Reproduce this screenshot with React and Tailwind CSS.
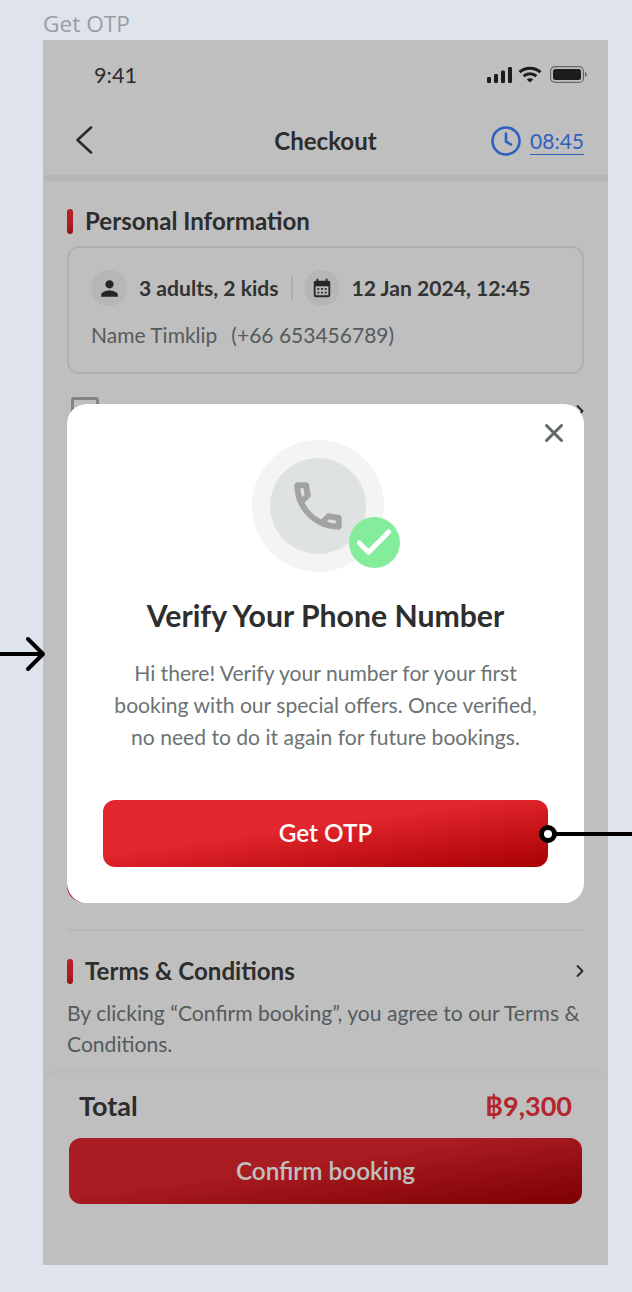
import React from 'react';
import { ChevronRight, X, Check } from 'lucide-react';
import { MdPerson, MdCalendarMonth } from 'react-icons/md';

function SectionTitle({ children }) {
  return (
    <div className="flex items-center gap-3">
      <span className="w-[6px] h-[25px] rounded-full bg-[linear-gradient(180deg,#ee2b33_60%,#c01a20_100%)]" />
      <h2 className="text-[24.1px] leading-7 font-bold text-[#3d3d3d]">{children}</h2>
    </div>
  );
}

function StatusIcons() {
  return (
    <div className="flex items-center gap-[5px]">
      <svg width="26" height="16" viewBox="0 0 26 16" fill="#262626">
        <rect x="0" y="10" width="4" height="6" rx="1.2" />
        <rect x="7" y="7" width="4" height="9" rx="1.2" />
        <rect x="14" y="3.5" width="4" height="12.5" rx="1.2" />
        <rect x="21" y="0" width="4" height="16" rx="1.2" />
      </svg>
      <svg width="24" height="17" viewBox="0 0 24 17" fill="none" stroke="#262626" strokeWidth="3">
        <path d="M1.5 6.2C7.5.8 16.5.8 22.5 6.2" />
        <path d="M5.6 10.2c3.7-3.2 9.1-3.2 12.8 0" />
        <path d="M12 16.5 8.8 13.4c1.9-1.5 4.5-1.5 6.4 0Z" fill="#262626" stroke="none" />
      </svg>
      <svg width="37" height="17" viewBox="0 0 37 17" fill="none" className="ml-[3px]">
        <rect x="0.6" y="0.6" width="32.8" height="15.8" rx="4.5" stroke="#8a8a8a" strokeWidth="1.2" />
        <rect x="3" y="3" width="28" height="11" rx="2.5" fill="#262626" />
        <path d="M35 6v5c1-.3 1.8-1.3 1.8-2.5S36 6.300 35 6Z" fill="#8a8a8a" />
      </svg>
    </div>
  );
}

function PhoneIcon() {
  return (
    <svg width="62" height="62" viewBox="0 0 24 24" fill="#a3a3a3" stroke="#a3a3a3" strokeWidth="0.3" strokeLinejoin="round">
      <path d="M6.54 5c.06.89.21 1.76.45 2.59l-1.2 1.2c-.41-1.2-.67-2.47-.76-3.79h1.51m9.86 12.02c.85.24 1.72.39 2.6.45v1.49c-1.32-.09-2.59-.35-3.8-.75l1.2-1.19M7.5 3H4c-.55 0-1 .45-1 1 0 9.39 7.61 17 17 17 .55 0 1-.45 1-1v-3.49c0-.55-.45-1-1-1-1.24 0-2.45-.2-3.57-.57-.1-.04-.21-.05-.31-.05-.26 0-.51.1-.71.29l-2.2 2.2c-2.83-1.45-5.15-3.76-6.59-6.59l2.2-2.2c.28-.28.36-.67.25-1.02C8.7 6.45 8.5 5.25 8.5 4c0-.55-.45-1-1-1z" />
    </svg>
  );
}

function Pill({ children }) {
  return (
    <span className="w-9 h-9 rounded-full bg-[#f3f3f3] flex items-center justify-center shrink-0">
      {children}
    </span>
  );
}

export default function App() {
  return (
    <div className="relative w-[632px] h-[1292px] overflow-hidden bg-[#dfe3ec] font-['Lato',sans-serif]">
      <p className="h-10 pl-[43px] pt-[10px] text-[22.7px] leading-7 text-[#989ca3] font-['Open_Sans',sans-serif]">Get OTP</p>

      {/* Phone frame */}
      <div className="relative ml-[43px] w-[565px] h-[1225px] bg-white overflow-hidden">
        <div className="h-[70px] pt-[21px] pl-[51px] pr-[21px] flex items-start justify-between">
          <span className="text-[21.6px] leading-7 text-[#3a3a3a]">9:41</span>
          <div className="pt-[5px]"><StatusIcons /></div>
        </div>

        <header className="relative h-[71px] border-b-[6px] border-[#f4f4f4] flex items-start justify-between pl-[32px] pr-[24px] pt-[16px]">
          <svg width="18" height="28" viewBox="0 0 18 28" fill="none" stroke="#3a3a3a" strokeWidth="2.6" strokeLinecap="round" strokeLinejoin="round">
            <path d="M16 1.500 2.500 14 16 26.500" />
          </svg>
          <h1 className="absolute left-0 right-0 top-[17px] text-center text-[24px] leading-7 font-bold text-[#3d3d3d]">Checkout</h1>
          <div className="flex items-center gap-[9px]">
            <svg width="30" height="30" viewBox="0 0 30 30" fill="none" stroke="#3f80ff" strokeWidth="2.6" strokeLinecap="round">
              <circle cx="15" cy="15" r="13.500" />
              <path d="M15 7.500v8l5 3" />
            </svg>
            <span className="text-[21px] leading-[27px] text-[#3f80ff] border-b border-[#3f80ff]">08:45</span>
          </div>
        </header>

        <main className="px-6 pt-[26px]">
          <SectionTitle>Personal Information</SectionTitle>

          <div className="mt-[11px] h-[128px] rounded-xl border-2 border-[#e6ebeb] pl-[22px] pt-[22px]">
            <div className="flex items-center">
              <Pill><MdPerson size={25} className="text-[#333]" /></Pill>
              <span className="ml-3 text-[21.1px] font-bold text-[#444]">3 adults, 2 kids</span>
              <span className="ml-3 mr-[11px] w-[2px] h-6 bg-[#e4e6e6]" />
              <Pill><MdCalendarMonth size={22} className="text-[#333]" /></Pill>
              <span className="ml-3 text-[21.1px] font-bold text-[#444]">12 Jan 2024, 12:45</span>
            </div>
            <p className="mt-[15px] flex gap-[14px] text-[21px] leading-7 text-[#727a7c]">
              <span>Name Timklip</span>
              <span>(+66 653456789)</span>
            </p>
          </div>

          {/* Content behind the dialog */}
          <div className="mt-[23px] h-[506px] flex justify-between items-start pl-1">
            <span className="w-[28px] h-7 rounded-[3px] border-[3px] border-[#aeb2b3]" />
            <ChevronRight size={20} strokeWidth={2.2} className="text-[#333] mt-[4px] -mr-[6px]" />
          </div>
          <div className="-mt-[65px] mr-6 h-[64px] rounded-2xl bg-[#d8262c]" />

          <hr className="mt-[27px] border-0 h-[2px] bg-[#f4f4f4]" />

          <div className="mt-[26px] flex items-center justify-between">
            <SectionTitle>Terms &amp; Conditions</SectionTitle>
            <ChevronRight size={20} strokeWidth={2.2} className="text-[#333] -mr-[6px]" />
          </div>
          <p className="mt-[12px] text-[21.1px] leading-[31px] text-[#727a7c]">
            By clicking “Confirm booking”, you agree to our Terms &amp; Conditions.
          </p>
        </main>

        <footer className="absolute left-0 right-0 bottom-0 h-[192px] rounded-t-xl bg-white pt-[15px] px-[26px] shadow-[0_-2px_4px_rgba(0,0,0,0.03)]">
          <div className="flex items-center justify-between px-[10px]">
            <span className="text-[27px] leading-9 font-bold text-[#3d3d3d]">Total</span>
            <span className="text-[27px] leading-9 font-bold text-[#f1323d]">฿9,300</span>
          </div>
          <button className="mt-[14px] w-[513px] h-[66px] rounded-xl bg-[linear-gradient(172deg,#e2262d_42%,#a80000_100%)] text-[24.300px] font-semibold text-white">
            Confirm booking
          </button>
        </footer>

        {/* Dim overlay and dialog */}
        <div className="absolute inset-0 bg-black/25" />
        <div className="absolute left-6 top-[364px] w-[517px] h-[499px] rounded-[20px] bg-white flex flex-col items-center pt-9">
          <X size={30} strokeWidth={2.4} className="absolute right-[15px] top-[14px] text-[#5f6769]" />
          <div className="relative mr-[16px] w-[132px] h-[132px] rounded-full bg-[#f4f4f4] flex items-center justify-center">
            <div className="w-24 h-24 rounded-full bg-[#dfe2e3] flex items-center justify-center">
              <PhoneIcon />
            </div>
            <span className="absolute left-[97px] top-[77px] w-[51px] h-[51px] rounded-full bg-[#85ec9c] flex items-center justify-center">
              <Check size={44} strokeWidth={2.7} className="text-white" />
            </span>
          </div>
          <h2 className="mt-[23px] text-[30.2px] leading-10 font-bold text-[#2e2e2e]">Verify Your Phone Number</h2>
          <p className="mt-[22px] w-[430px] text-center text-[21.1px] leading-8 text-[#6b7274]">
            Hi there! Verify your number for your first booking with our special offers. Once verified, no need to do it again for future bookings.
          </p>
          <button className="mt-[47px] w-[445px] h-[67px] rounded-xl bg-[linear-gradient(172deg,#e2262d_42%,#a80000_100%)] text-[24.300px] font-semibold text-white">
            Get OTP
          </button>
        </div>
      </div>

      {/* Prototype annotations */}
      <svg className="absolute left-0 top-[635px]" width="48" height="38" viewBox="0 0 48 38" fill="none" stroke="#000" strokeWidth="4" strokeLinecap="round" strokeLinejoin="round">
        <path d="M0 19h42" />
        <path d="M28 4l15 15-15 15" />
      </svg>
      <svg className="absolute left-[538px] top-[824px]" width="94" height="20" viewBox="0 0 94 20" fill="none" stroke="#000">
        <path d="M18 10h76" strokeWidth="4" />
        <circle cx="10" cy="10" r="6.500" fill="#fff" strokeWidth="5" />
      </svg>
    </div>
  );
}
